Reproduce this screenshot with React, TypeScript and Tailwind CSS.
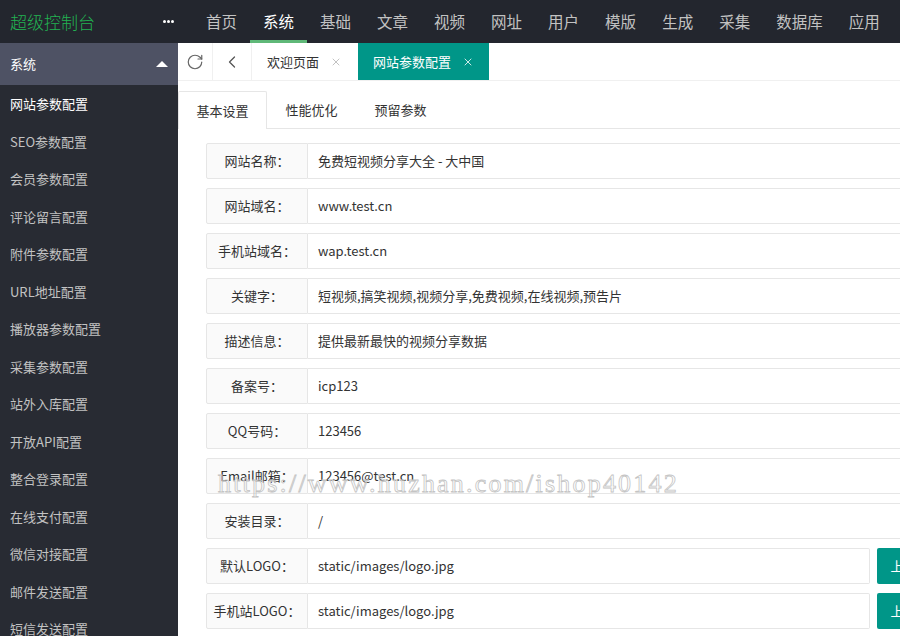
import { RotateCw, ChevronLeft, X } from "lucide-react";

const navItems = ["首页", "系统", "基础", "文章", "视频", "网址", "用户", "模版", "生成", "采集", "数据库", "应用"];

const menuItems = [
    "网站参数配置",
    "SEO参数配置",
    "会员参数配置",
    "评论留言配置",
    "附件参数配置",
    "URL地址配置",
    "播放器参数配置",
    "采集参数配置",
    "站外入库配置",
    "开放API配置",
    "整合登录配置",
    "在线支付配置",
    "微信对接配置",
    "邮件发送配置",
    "短信发送配置",
];

const fields: { label: string; value: string; upload?: boolean }[] = [
    { label: "网站名称：", value: "免费短视频分享大全 - 大中国" },
    { label: "网站域名：", value: "www.test.cn" },
    { label: "手机站域名：", value: "wap.test.cn" },
    { label: "关键字：", value: "短视频,搞笑视频,视频分享,免费视频,在线视频,预告片" },
    { label: "描述信息：", value: "提供最新最快的视频分享数据" },
    { label: "备案号：", value: "icp123" },
    { label: "QQ号码：", value: "123456" },
    { label: "Email邮箱：", value: "123456@test.cn" },
    { label: "安装目录：", value: "/" },
    { label: "默认LOGO：", value: "static/images/logo.jpg", upload: true },
    { label: "手机站LOGO：", value: "static/images/logo.jpg", upload: true },
];

export default function App() {
    return (
        <div
            className="relative w-[900px] h-[636px] overflow-hidden flex flex-col bg-white text-[#333]"
            style={{ fontFamily: '"Noto Sans CJK SC", "Noto Sans", sans-serif' }}
        >
            {/* Header */}
            <div className="h-[43px] shrink-0 bg-[#23262e] flex items-stretch">
                <div className="w-[160px] shrink-0 pl-[10px] flex items-center text-[17px] font-light text-[#22b352] leading-none">
                    超级控制台
                </div>
                <div className="flex items-center px-[3px] gap-[1px]">
                    <span className="w-[3px] h-[3px] rounded-full bg-white" />
                    <span className="w-[3px] h-[3px] rounded-full bg-white" />
                    <span className="w-[3px] h-[3px] rounded-full bg-white" />
                </div>
                <div className="flex ml-[16px]">
                    {navItems.map((item) => (
                        <div
                            key={item}
                            className={`relative px-[13px] flex items-center text-[15.5px] leading-none ${item === "系统" ? "text-white" : "text-[#c2c2c2]"}`}
                        >
                            {item}
                            {item === "系统" && (
                                <span className="absolute left-0 right-0 bottom-0 h-[3px] bg-[#5fb878]" />
                            )}
                        </div>
                    ))}
                </div>
            </div>

            <div className="flex flex-1 min-h-0">
                {/* Sidebar */}
                <div className="w-[178px] shrink-0 bg-[#282b33] flex flex-col">
                    <div className="h-[42px] shrink-0 bg-[#4e5264] flex items-center justify-between pl-[10px] pr-[10px] text-[13px] text-white">
                        <span>系统</span>
                        <span className="w-0 h-0 border-l-[6px] border-r-[6px] border-b-[6px] border-l-transparent border-r-transparent border-b-white" />
                    </div>
                    {menuItems.map((item, i) => (
                        <div
                            key={item}
                            className={`h-[37.5px] shrink-0 flex items-center pl-[10px] text-[13px] ${i === 0 ? "text-white" : "text-[#c2c2c2]"}`}
                        >
                            {item}
                        </div>
                    ))}
                </div>

                {/* Main */}
                <div className="flex-1 min-w-0 flex flex-col">
                    <div className="h-[38px] shrink-0 flex border-b border-[#f0f0f0] bg-white">
                        <div className="w-[35px] flex items-center justify-center border-r border-[#f0f0f0] text-[#666]">
                            <RotateCw size={18} strokeWidth={1.6} />
                        </div>
                        <div className="w-[39px] flex items-center justify-center border-r border-[#f0f0f0] text-[#555]">
                            <ChevronLeft size={20} strokeWidth={1.5} />
                        </div>
                        <div className="w-[106px] flex items-center pl-[15px] text-[13px] text-[#333]">
                            <span>欢迎页面</span>
                            <X size={12} className="ml-[11px] text-[#c2c2c2]" />
                        </div>
                        <div className="w-[131px] flex items-center pl-[15px] bg-[#009688] text-[13px] text-white">
                            <span>网站参数配置</span>
                            <X size={12} className="ml-[11px] text-white/80" />
                        </div>
                    </div>

                    <div className="mt-[10px] flex border-b border-[#e6e6e6] h-[38px] shrink-0">
                        <div className="w-[89px] justify-center flex items-center text-[13px] border border-b-0 border-[#e6e6e6] bg-white -mb-px rounded-t-[2px]">
                            基本设置
                        </div>
                        <div className="w-[89px] justify-center flex items-center text-[13px]">性能优化</div>
                        <div className="w-[89px] justify-center flex items-center text-[13px]">预留参数</div>
                    </div>

                    <div className="pl-[28px] pt-[14px] flex flex-col gap-[9px]">
                        {fields.map((f) => (
                            <div key={f.label} className="w-[750px] h-[36px] flex text-[13px]">
                                <div className="w-[102px] shrink-0 flex items-center justify-center bg-[#fafafa] border border-[#e6e6e6] rounded-l-[2px]">
                                    {f.label}
                                </div>
                                <div className="flex-1 flex items-center pl-[10px] border border-l-0 border-[#e6e6e6] rounded-r-[2px]">
                                    {f.value}
                                </div>
                                {f.upload && (
                                    <div className="w-[79px] ml-[7px] shrink-0 bg-[#009688] rounded-[2px] flex items-center justify-center text-white text-[13px]">
                                        上传图片
                                    </div>
                                )}
                            </div>
                        ))}
                    </div>
                </div>
            </div>

            {/* watermark */}
            <div
                className="absolute left-[218px] top-[471px] text-[26px] leading-none tracking-[2.2px] text-transparent [-webkit-text-stroke:0.8px_#c4c4c4] pointer-events-none whitespace-nowrap"
                style={{ fontFamily: '"Liberation Serif", "DejaVu Serif", serif' }}
            >
                https://www.huzhan.com/ishop40142
            </div>
        </div>
    );
}
